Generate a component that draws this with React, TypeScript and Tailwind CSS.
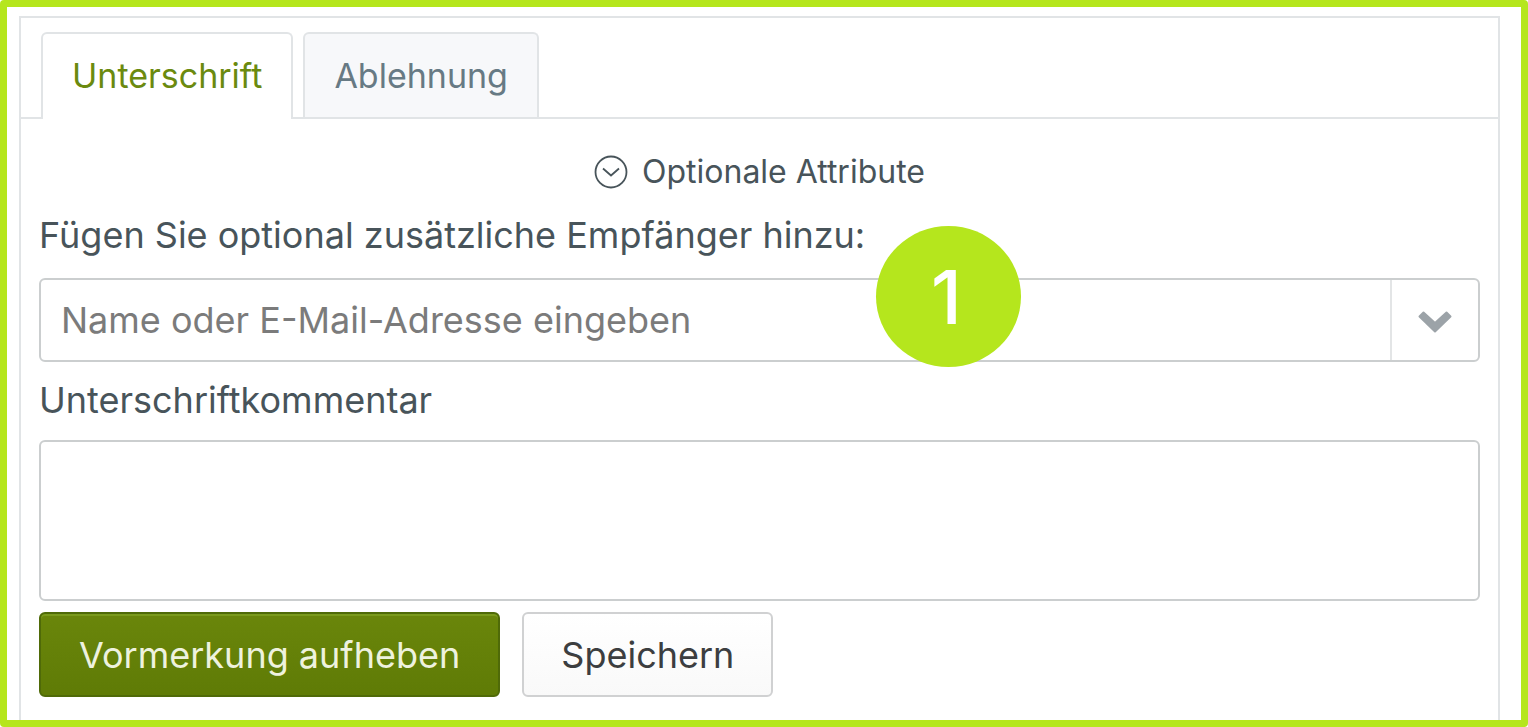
import { useState } from 'react';

const tabs = [
  { id: 'sign', label: 'Unterschrift' },
  { id: 'decline', label: 'Ablehnung' },
];

// Circled chevron in front of the collapsible section title
function CircleChevron() {
  return (
    <svg className="h-[34px] w-[34px]" viewBox="0 0 34 34" fill="none" stroke="currentColor" strokeWidth="1.8" aria-hidden="true">
      <circle cx="17" cy="17" r="15.5" />
      <path d="M9 13.5 17 20.5 25 13.5" />
    </svg>
  );
}

// Heavy chevron of the recipient picker
function ChevronDown() {
  return (
    <svg
      className="h-[22px] w-[34px]"
      viewBox="0 0 34 22"
      fill="#9ca3a8"
      stroke="#9ca3a8"
      strokeWidth="2"
      strokeLinejoin="round"
      aria-hidden="true"
    >
      <path d="M1.5 5.500 5.500 1.5 17 12 28.500 1.5 32.500 5.500 17 20.500z" />
    </svg>
  );
}

export default function App() {
  const [activeTab, setActiveTab] = useState('sign');
  const [recipient, setRecipient] = useState('');
  const [comment, setComment] = useState('');

  return (
    <div className="flex min-h-screen flex-col rounded-sm border-7 border-[#b5e61d] bg-white pt-[9px] pr-[21px] pl-3 font-['Inter',sans-serif] text-[#48545a]">
      <div className="flex-1 border-x-2 border-t-2 border-[#e1e4e6]">
        {/* Tabs */}
        <div role="tablist" className="flex gap-[10px] border-b-2 border-[#e1e4e6] px-5 pt-[14px]">
          {tabs.map((tab) => (
            <button
              key={tab.id}
              type="button"
              role="tab"
              aria-selected={activeTab === tab.id}
              onClick={() => setActiveTab(tab.id)}
              className={
                activeTab === tab.id
                  ? '-mb-[2px] h-[87px] rounded-t-md border-x-2 border-t-2 border-[#e1e4e6] bg-white px-[29px] pb-[2px] text-[34px] leading-10 text-[#6b8a0f]'
                  : 'h-[85px] rounded-t-md border-x-2 border-t-2 border-[#e1e4e6] bg-[#f7f8fa] px-[29px] text-[34px] leading-10 text-[#677a84]'
              }
            >
              {tab.label}
            </button>
          ))}
        </div>

        <form className="px-[18px] pt-[33px]" onSubmit={(e) => e.preventDefault()}>
          <div className="flex justify-center">
            <button type="button" className="flex items-center gap-[14px] text-[32px] leading-10">
              <CircleChevron />
              Optionale Attribute
            </button>
          </div>

          {/* Recipients */}
          <label htmlFor="recipients" className="mt-[23px] mb-[23px] block text-[36px] leading-10">
            Fügen Sie optional zusätzliche Empfänger hinzu:
          </label>
          <div className="relative flex h-[84px] rounded-md border-2 border-[#cbcecf] bg-white">
            <input
              id="recipients"
              type="text"
              value={recipient}
              onChange={(e) => setRecipient(e.target.value)}
              placeholder="Name oder E-Mail-Adresse eingeben"
              className="min-w-0 flex-1 px-5 text-[36px] leading-10 outline-none placeholder:text-[#7b7b7b]"
            />
            <button
              type="button"
              aria-label="Empfänger auswählen"
              className="flex w-[88px] items-center justify-center border-l-2 border-[#e3e5e6] pt-1"
            >
              <ChevronDown />
            </button>
            <span className="absolute -top-[54px] left-[58.1%] flex h-[141px] w-[145px] items-center justify-center rounded-[50%] bg-[#b5e61d] pr-1 text-[74px] leading-none font-medium text-white">
              1
            </span>
          </div>

          {/* Comment */}
          <label htmlFor="comment" className="mt-[18px] mb-5 block text-[36px] leading-10">
            Unterschriftkommentar
          </label>
          <textarea
            id="comment"
            value={comment}
            onChange={(e) => setComment(e.target.value)}
            className="block h-[161px] w-full resize-none rounded-md border-2 border-[#cbcecf] bg-white px-5 py-4 text-[36px] leading-10 outline-none"
          />

          <div className="mt-[11px] flex gap-[22px]">
            <button
              type="submit"
              className="h-[85px] rounded-md border-2 border-[#4f6a08] bg-linear-to-b from-[#6a860b] to-[#5f7b06] px-[38px] text-[36px] leading-10 text-[#eef2de] inset-shadow-[0_2px_0_#7a9a1c]"
            >
              Vormerkung aufheben
            </button>
            <button
              type="button"
              className="h-[85px] rounded-md border-2 border-[#d0d1d2] bg-linear-to-b from-white to-[#f9f9f9] px-[37px] text-[36px] leading-10 text-[#3c3e40]"
            >
              Speichern
            </button>
          </div>
        </form>
      </div>
    </div>
  );
}
